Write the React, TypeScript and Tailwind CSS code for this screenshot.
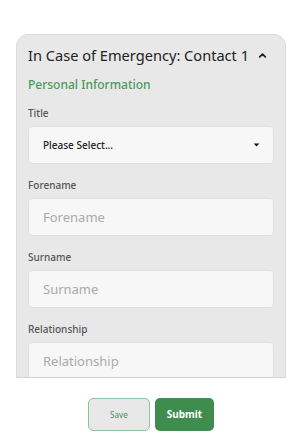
import { ChevronUp } from "lucide-react";

const font = { fontFamily: "'Noto Sans', sans-serif" };

function Field({ label, placeholder }: { label: string; placeholder: string }) {
  return (
    <div className="flex flex-col">
      <label className="text-[10px] font-medium text-[#555] leading-[14px] mb-[6px]">{label}</label>
      <input
        placeholder={placeholder}
        className="h-[38px] w-full rounded-[4px] border border-[#e0e0e0] bg-[#f7f7f7] px-[14px] text-[13px] text-[#333] placeholder:text-[#aaa] outline-none"
      />
    </div>
  );
}

export default function App() {
  return (
    <div className="w-[302px] h-[437px] bg-white pt-[34px]" style={font}>
      <div className="mx-[16px] h-[344px] overflow-hidden border-b border-[#c9d5e2]">
        <div className="rounded-t-[12px] border border-[#dcdcdc] bg-[#e8e8e8] px-[11px] pt-[9px] pb-4">
          <div className="flex items-center">
            <h2 className="flex-1 min-w-0 whitespace-nowrap text-[14.6px] text-[#222] leading-[22px]">
              In Case of Emergency: Contact 1
            </h2>
            <ChevronUp className="h-[11px] w-[11px] shrink-0 text-[#222] mr-[6px]" strokeWidth={4} />
          </div>
          <p className="mt-[10px] text-[12px] font-medium text-[#4b9a5b] leading-[18px]">Personal Information</p>
          <div className="mt-[12px] flex flex-col gap-[14px]">
            <div className="flex flex-col">
              <label className="text-[10px] font-medium text-[#555] leading-[14px] mb-[6px]">Title</label>
              <div className="h-[38px] w-full rounded-[4px] border border-[#e0e0e0] bg-[#f7f7f7] px-[14px] flex items-center justify-between">
                <span className="text-[10px] font-medium text-[#222]">Please Select...</span>
                <svg width="7" height="4" viewBox="0 0 8 5" className="mr-[-1px]">
                  <path d="M0.5 0.5h7L4 4.5z" fill="#111" />
                </svg>
              </div>
            </div>
            <Field label="Forename" placeholder="Forename" />
            <Field label="Surname" placeholder="Surname" />
            <Field label="Relationship" placeholder="Relationship" />
          </div>
        </div>
      </div>
      <div className="mt-[20px] flex justify-center gap-[5px]">
        <button className="h-[33px] w-[62px] rounded-[5px] border border-[#8cc49a] bg-[#e8e8e8] text-[8px] font-medium text-[#5c9a6a]">
          Save
        </button>
        <button className="h-[33px] w-[59px] rounded-[5px] bg-[#3f8d4e] text-[10px] font-bold text-white">
          Submit
        </button>
      </div>
    </div>
  );
}
